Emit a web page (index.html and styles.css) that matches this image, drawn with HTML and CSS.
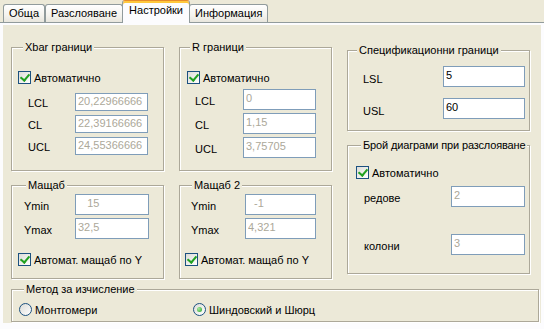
FILE: index.html
```html
<!DOCTYPE html>
<html lang="bg">
<head>
<meta charset="UTF-8">
<title>Настройки</title>
<link rel="stylesheet" href="styles.css">
</head>
<body>

<div class="tabs">
  <div class="tab">Обща</div>
  <div class="tab">Разслояване</div>
  <div class="tab active">Настройки</div>
  <div class="tab">Информация</div>
</div>

<div class="page">
  <div class="panel">
    <div class="top">

      <div class="col">
        <fieldset class="group g-xbar">
          <legend>Xbar граници</legend>
          <div class="check"><span class="box on"></span>Автоматично</div>
          <div class="row"><label>LCL</label><input class="val" value="20,22966666" disabled></div>
          <div class="row"><label>CL</label><input class="val" value="22,39166666" disabled></div>
          <div class="row"><label>UCL</label><input class="val" value="24,55366666" disabled></div>
        </fieldset>
        <fieldset class="group g-scale">
          <legend>Мащаб</legend>
          <div class="row"><label>Ymin</label><input class="val" value="   15" disabled></div>
          <div class="row"><label>Ymax</label><input class="val" value="32,5" disabled></div>
          <div class="check"><span class="box on"></span>Автомат. мащаб по Y</div>
        </fieldset>
      </div>

      <div class="col">
        <fieldset class="group g-r">
          <legend>R граници</legend>
          <div class="check"><span class="box on"></span>Автоматично</div>
          <div class="row"><label>LCL</label><input class="val" value="0" disabled></div>
          <div class="row"><label>CL</label><input class="val" value="1,15" disabled></div>
          <div class="row"><label>UCL</label><input class="val" value="3,75705" disabled></div>
        </fieldset>
        <fieldset class="group g-scale g-scale2">
          <legend>Мащаб 2</legend>
          <div class="row"><label>Ymin</label><input class="val" value="  -1" disabled></div>
          <div class="row"><label>Ymax</label><input class="val" value="4,321" disabled></div>
          <div class="check"><span class="box on"></span>Автомат. мащаб по Y</div>
        </fieldset>
      </div>

      <div class="col col-wide">
        <fieldset class="group g-spec">
          <legend>Спецификационни граници</legend>
          <div class="row"><label>LSL</label><input class="val" value="5"></div>
          <div class="row"><label>USL</label><input class="val" value="60"></div>
        </fieldset>
        <fieldset class="group g-count">
          <legend>Брой диаграми при разслояване</legend>
          <div class="check"><span class="box on"></span>Автоматично</div>
          <div class="row"><label>редове</label><input class="val" value="2" disabled></div>
          <div class="row"><label>колони</label><input class="val" value="3" disabled></div>
        </fieldset>
      </div>

    </div>

    <fieldset class="group g-method">
      <legend>Метод за изчисление</legend>
      <div class="options">
        <div class="option"><span class="radio"></span>Монтгомери</div>
        <div class="option"><span class="radio on"></span>Шиндовский и Шюрц</div>
      </div>
    </fieldset>
  </div>
</div>

</body>
</html>
```

FILE: styles.css
```css
* {
  box-sizing: border-box;
}
body {
  margin: 0;
  background-color: #ECE9D8;
  font-family: "Liberation Sans", Arial, sans-serif;
  font-size: 11px;
  color: #000;
}

/* tab strip */
.tabs {
  display: flex;
  align-items: flex-end;
  height: 23px;
  padding-left: 3px;
  border-bottom: 1px solid #919B9C;
}
.tab {
  height: 18px;
  padding: 0 5px;
  line-height: 17px;
  border: 1px solid #919B9C;
  border-bottom: none;
  border-radius: 3px 3px 0 0;
  background: linear-gradient(#FFFFFF, #F4F3EE 60%, #E8E6DD);
}
.tab.active {
  height: 23px;
  margin: 0 -1px -1px;
  padding: 0 6px;
  line-height: 19px;
  border-top: 1px solid #E68B2C;
  box-shadow: inset 0 2px #FFC83C;
  background: #FCFCFE;
  position: relative;
}

/* tab page */
.page {
  background-color: #FCFCFE;
  padding: 2px 3px 0 3px;
  height: 306px;
}
.panel {
  background-color: #ECE9D8;
  height: 298px;
  padding: 16px 0 0 8px;
}
.top {
  display: flex;
  gap: 15px;
}
.col {
  display: flex;
  flex-direction: column;
  gap: 8px;
  width: 153px;
}
.col-wide {
  width: 183px;
  margin-top: 3px;
}

/* group boxes */
.group {
  margin: 0;
  padding: 0;
  min-width: 0;
  border: 1px solid #ACA899;
  box-shadow: inset 1px 1px #FFFFFF, 1px 1px #FFFFFF;
}
.group legend {
  padding: 0 2px;
  line-height: 13px;
  white-space: nowrap;
  background-color: #ECE9D8;
}
.row {
  display: flex;
  align-items: center;
}
.row label {
  padding-top: 2px;
}
.val {
  height: 21px;
  margin: 0;
  padding: 1px 2px 5px;
  border: 1px solid #7F9DB9;
  background-color: #FFFFFF;
  font-family: inherit;
  font-size: 11px;
  color: #000;
}
.val:disabled {
  color: #ACA899;
  background-color: #FFFFFF;
}

.check, .option {
  display: flex;
  align-items: center;
  gap: 3px;
  height: 13px;
}
.box {
  position: relative;
  width: 13px;
  height: 13px;
  border: 1px solid #1C5180;
  background: linear-gradient(135deg, #DCDCD7, #FFFFFF);
}
.box.on::after {
  content: "";
  position: absolute;
  left: 3px;
  top: 0;
  width: 4px;
  height: 7px;
  border: solid #21A121;
  border-width: 0 2px 2px 0;
  transform: rotate(40deg);
}
.radio {
  position: relative;
  width: 13px;
  height: 13px;
  border: 1px solid #1C5180;
  border-radius: 50%;
  background: linear-gradient(135deg, #DCDCD7, #FFFFFF);
}
.radio.on::after {
  content: "";
  position: absolute;
  left: 3px;
  top: 3px;
  width: 5px;
  height: 5px;
  border-radius: 50%;
  background: radial-gradient(circle at 35% 35%, #A8EBA0, #21A121);
}

/* Xbar */
.g-xbar {
  height: 130px;
  padding: 17px 0 0 6px;
}
.g-xbar legend { margin-left: 5px; }
.g-xbar .row { margin-top: 4px; }
.g-xbar .row:nth-of-type(2) { margin-top: 9px; }
.g-xbar .row label { width: 57px; padding-left: 10px; }
.g-xbar .val { width: 73px; height: 18px; padding-bottom: 3px; }

/* R */
.g-r {
  height: 130px;
  padding: 17px 0 0 7px;
}
.g-r legend { margin-left: 3px; }
.g-r .row { margin-top: 3px; }
.g-r .row:nth-of-type(2) { margin-top: 5px; }
.g-r .row label { width: 56px; padding-left: 8px; }
.g-r .val { width: 73px; }

/* scale */
.g-scale {
  height: 100px;
  padding: 2px 0 0 6px;
}
.g-scale legend { margin-left: 8px; }
.g-scale .row + .row { margin-top: 3px; }
.g-scale .row label { width: 57px; padding-left: 6px; }
.g-scale .val { width: 74px; }
.g-scale .check { margin-top: 14px; }
.g-scale2 { padding-left: 5px; }
.g-scale2 legend { margin-left: 7px; }
.g-scale2 .row label { width: 60px; padding-left: 6px; }
.g-scale2 .val { width: 71px; }

/* spec limits */
.g-spec {
  height: 87px;
  padding-top: 9px;
}
.g-spec legend { margin-left: 9px; }
.g-spec .row + .row { margin-top: 11px; }
.g-spec .row label { width: 95px; padding-left: 15px; padding-top: 4px; }
.g-spec .val { width: 82px; }

/* chart count */
.g-count {
  height: 135px;
  padding: 14px 0 0 8px;
}
.g-count legend { margin-left: 5px; letter-spacing: -0.15px; }
.g-count .row { margin-top: 7px; }
.g-count .row + .row { margin-top: 27px; }
.g-count .row label { width: 95px; padding-left: 8px; }
.g-count .val { width: 74px; }

/* method */
.g-method {
  width: 528px;
  height: 39px;
  margin-top: 4px;
  padding: 7px 0 0 7px;
}
.g-method legend { margin-left: 5px; }
.options {
  display: flex;
}
.option:first-child {
  width: 174px;
}
```
